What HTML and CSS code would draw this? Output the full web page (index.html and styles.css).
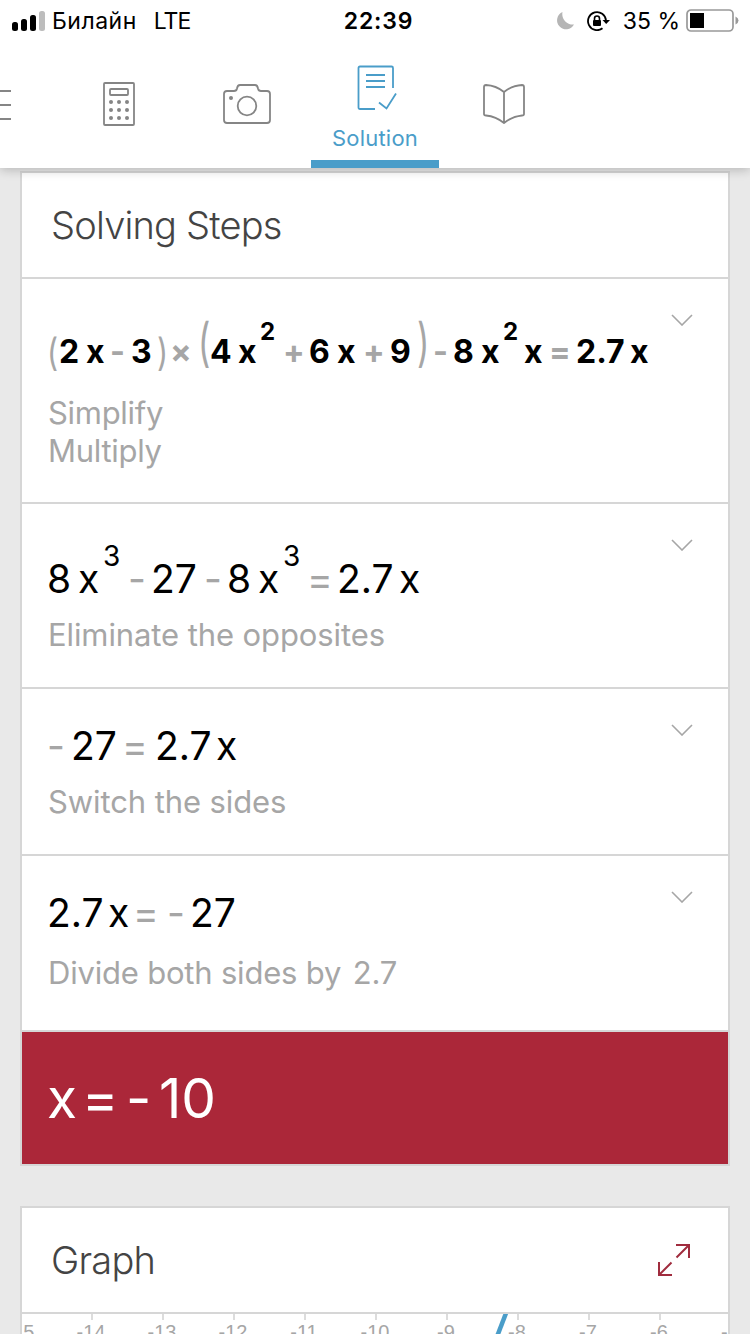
FILE: index.html
```html
<!DOCTYPE html>
<html lang="en">
<head>
  <meta charset="UTF-8" />
  <meta name="viewport" content="width=device-width, initial-scale=1.0"/>
  <title>Solution</title>
  <link rel="stylesheet" href="styles.css">
</head>
<body>

  <header class="top">
    <div class="status">
      <div class="status-left">
        <svg class="signal" viewBox="0 0 34 20">
          <rect x="0" y="11" width="6" height="9" rx="2.5"/>
          <rect x="9" y="8" width="6" height="12" rx="2.5"/>
          <rect x="18" y="4" width="6" height="16" rx="2.5"/>
          <rect x="27" y="0" width="6" height="20" rx="2.5" fill="#bdbdbd"/>
        </svg>
        <span class="carrier">Билайн</span>
        <span class="network">LTE</span>
      </div>
      <div class="clock">22:39</div>
      <div class="status-right">
        <svg class="moon" viewBox="0 0 18 18"><path d="M6.500 0A9 9 0 1 0 18 12.500A10.500 10.500 0 0 1 6.500 0z" fill="#b5b5b5"/></svg>
        <svg class="lock" viewBox="0 0 23 20">
          <path d="M15.500 17.300A9 9 0 1 1 19 9.500" fill="none" stroke="#000" stroke-width="1.800"/>
          <path d="M15.500 9H23L19.200 13z"/>
          <rect x="6" y="9" width="8" height="6" rx="1"/>
          <path d="M7.500 9.500V7.500a2.500 2.500 0 0 1 5 0V9.500" fill="none" stroke="#000" stroke-width="1.600"/>
        </svg>
        <span class="percent">35 %</span>
        <svg class="battery" viewBox="0 0 53 23">
          <rect x="1" y="1" width="46" height="21" rx="4" fill="none" stroke="#999" stroke-width="1.700"/>
          <rect x="4" y="4" width="14" height="15"/>
          <path d="M49.500 7.500q3 1.500 3 4t-3 4z" fill="#999"/>
        </svg>
      </div>
    </div>

    <nav class="tabs">
      <div class="tab tab-menu">
        <svg viewBox="0 0 12 32"><path d="M0 2H11M0 16H11M0 30H11"/></svg>
      </div>
      <div class="tab">
        <svg class="icon-calc" viewBox="0 0 32 44">
          <rect x="1" y="1" width="30" height="42" rx="1"/>
          <rect x="7" y="7" width="18" height="6" rx="1"/>
          <g class="dots">
            <circle cx="8" cy="20" r="2"/><circle cx="16" cy="20" r="2"/><circle cx="24" cy="20" r="2"/>
            <circle cx="8" cy="28" r="2"/><circle cx="16" cy="28" r="2"/><circle cx="24" cy="28" r="2"/>
            <circle cx="8" cy="36" r="2"/><circle cx="16" cy="36" r="2"/><circle cx="24" cy="36" r="2"/>
          </g>
        </svg>
      </div>
      <div class="tab">
        <svg class="icon-camera" viewBox="0 0 48 40">
          <path d="M4 7H11Q13.500 7 14 4.500Q14.500 1 17 1H32Q34.500 1 35 4.500Q35.500 7 38 7H44Q47 7 47 10V36Q47 39 44 39H4Q1 39 1 36V10Q1 7 4 7z"/>
          <circle cx="24" cy="22" r="9.300"/>
          <g class="dots"><circle cx="8" cy="14" r="2"/></g>
        </svg>
      </div>
      <div class="tab tab-active">
        <svg class="icon-solution" viewBox="0 0 40 46">
          <path d="M18 44H3Q1.500 44 1.500 42.500V3Q1.500 1.500 3 1.500H34.500Q36 1.500 36 3V23M9 10H28M9 16H28M9 22H28M22 37.500L29.500 43.500L39 28.500"/>
        </svg>
        <span>Solution</span>
      </div>
      <div class="tab">
        <svg class="icon-book" viewBox="0 0 42 40">
          <path d="M21 8Q13 1.500 3 1Q1 1 1 3V30Q1 31.500 3 31.500Q13 32.500 21 39Q29 32.500 39 31.500Q41 31.500 41 30V3Q41 1 39 1Q29 1.500 21 8zM21 8V39"/>
        </svg>
      </div>
    </nav>
  </header>

  <main>
    <section class="card">
      <h2>Solving Steps</h2>

      <div class="step step-1">
        <div class="eq eq-1">
          <i class="paren">(</i><b>2</b><b>x</b><i>-</i><b>3</b><i class="paren">)</i><i>×</i><i class="paren big">(</i><b>4</b><b>x</b><sup>2</sup><i>+</i><b>6</b><b>x</b><i>+</i><b>9</b><i class="paren big">)</i><i>-</i><b>8</b><b>x</b><sup>2</sup><b>x</b><i>=</i><b>2.7</b><b>x</b>
        </div>
        <p>Simplify<br>Multiply</p>
        <svg class="chevron" viewBox="0 0 22 12"><path d="M1 1L11 11L21 1"/></svg>
      </div>

      <div class="step step-2">
        <div class="eq eq-2">
          <b>8</b><b>x</b><sup>3</sup><i>-</i><b>27</b><i>-</i><b>8</b><b>x</b><sup>3</sup><i>=</i><b>2.7</b><b>x</b>
        </div>
        <p>Eliminate the opposites</p>
        <svg class="chevron" viewBox="0 0 22 12"><path d="M1 1L11 11L21 1"/></svg>
      </div>

      <div class="step step-3">
        <div class="eq eq-3">
          <i>-</i><b>27</b><i>=</i><b>2.7</b><b>x</b>
        </div>
        <p>Switch the sides</p>
        <svg class="chevron" viewBox="0 0 22 12"><path d="M1 1L11 11L21 1"/></svg>
      </div>

      <div class="step step-4">
        <div class="eq eq-4">
          <b>2.7</b><b>x</b><i>=</i><i>-</i><b>27</b>
        </div>
        <p>Divide both sides by <span class="value">2.7</span></p>
        <svg class="chevron" viewBox="0 0 22 12"><path d="M1 1L11 11L21 1"/></svg>
      </div>

      <div class="result">
        <div class="eq eq-result"><b>x</b><b>=</b><b>-</b><b>10</b></div>
      </div>
    </section>

    <section class="card graph">
      <div class="graph-head">
        <h2>Graph</h2>
        <svg class="expand" viewBox="0 0 34 34"><path d="M19 2H32V15M32 2L19.500 14.500M2 19V32H15M2 32L14.500 19.500"/></svg>
      </div>
      <svg class="plot" viewBox="0 0 706 40">
        <path class="ticks" d="M70 0V6M141 0V6M212 0V6M283 0V6M354 0V6M425 0V6M496 0V6M567 0V6M638 0V6"/>
        <g class="labels">
          <text x="-2" y="25">-15</text>
          <text x="69" y="25">-14</text>
          <text x="140" y="25">-13</text>
          <text x="211" y="25">-12</text>
          <text x="282" y="25">-11</text>
          <text x="353" y="25">-10</text>
          <text x="424" y="25">-9</text>
          <text x="495" y="25">-8</text>
          <text x="566" y="25">-7</text>
          <text x="637" y="25">-6</text>
          <text x="708" y="25">-5</text>
        </g>
        <path class="curve" d="M486 -6L466 46"/>
      </svg>
    </section>
  </main>

</body>
</html>
```
FILE: styles.css
```css
body {
  margin: 0;
  width: 750px;
  height: 1334px;
  overflow: hidden;
  background: #e9e9e9;
  font-family: Inter, "Liberation Sans", sans-serif;
  color: #000;
}

svg {
  display: block;
}

.top {
  position: relative;
  z-index: 1;
  height: 168px;
  background: #fff;
  box-shadow: 0 2px 10px rgba(0,0,0,0.22);
}

/* status bar */
.status {
  display: grid;
  grid-template-columns: 1fr auto 1fr;
  align-items: center;
  height: 41px;
  padding: 0 11px 0 12px;
  font-size: 23px;
}

.status-left,
.status-right {
  display: flex;
  align-items: center;
}

.status-right {
  justify-content: flex-end;
}

.signal {
  width: 34px;
  height: 20px;
  margin-right: 6px;
}

.carrier {
  margin-right: 17px;
  letter-spacing: 0.5px;
}

.network {
  letter-spacing: -1px;
}

.clock {
  margin-left: 6px;
  font-size: 23px;
  font-weight: 600;
  letter-spacing: 0.8px;
}

.moon {
  width: 18px;
  height: 18px;
  margin-right: 13px;
}

.lock {
  width: 23px;
  height: 20px;
  margin-right: 13px;
}

.percent {
  margin-right: 6px;
}

.battery {
  width: 53px;
  height: 23px;
}

/* tabs */
.tabs {
  display: grid;
  grid-template-columns: 55px 128px 128px 128px 130px;
  height: 127px;
}

.tab {
  display: flex;
  flex-direction: column;
  align-items: center;
}

.tab svg {
  fill: none;
  stroke: #858585;
  stroke-width: 1.8;
}

.tab .dots {
  fill: #858585;
  stroke: none;
}

.tab-menu {
  align-items: flex-start;
}

.tab-menu svg {
  width: 12px;
  height: 32px;
  margin-top: 48px;
}

.icon-calc {
  width: 32px;
  height: 44px;
  margin-top: 41px;
}

.icon-camera {
  width: 48px;
  height: 40px;
  margin-top: 43px;
}

.icon-book {
  width: 42px;
  height: 40px;
  margin-top: 43px;
}

.tab-active {
  box-sizing: border-box;
  border-bottom: 8px solid #4a9dc9;
  color: #4a9dc9;
  font-size: 22px;
  letter-spacing: 0.2px;
}

.tab-active svg {
  width: 40px;
  height: 46px;
  margin-top: 24px;
  margin-left: 3px;
  stroke: #4a9dc9;
}

.tab-active span {
  margin-top: 14px;
}

/* cards */
main {
  padding: 3px 20px 0;
}

.card {
  border: 2px solid #d6d6d6;
  background: #fff;
  margin-bottom: 40px;
}

h2 {
  margin: 0;
  padding-left: 29px;
  font-size: 38px;
  font-weight: 300;
  line-height: 104px;
  letter-spacing: -0.8px;
  color: #444;
}

.card > h2,
.graph-head {
  border-bottom: 2px solid #d6d6d6;
}

.step {
  position: relative;
  box-sizing: border-box;
  padding-left: 25px;
  border-bottom: 2px solid #d6d6d6;
}

.step-1 { height: 225px; padding-top: 49px; }
.step-2 { height: 185px; padding-top: 51px; }
.step-3 { height: 167px; padding-top: 33px; }
.step-4 { height: 176px; padding-top: 33px; }

.step p {
  margin: 13px 0 0 1px;
  font-size: 31px;
  line-height: 38px;
  letter-spacing: -0.1px;
  color: #a6a6a6;
}

.step-1 p {
  margin-top: 18px;
  letter-spacing: -0.3px;
}

.step-4 p {
  margin-top: 17px;
  letter-spacing: -0.2px;
}

.value {
  margin-left: 3px;
}

.chevron {
  position: absolute;
  top: 35px;
  right: 35px;
  width: 22px;
  height: 12px;
  fill: none;
  stroke: #a6a6a6;
  stroke-width: 1.6;
}

/* equations: one column per token */
.eq {
  display: grid;
  height: 48px;
  line-height: 48px;
  font-size: 39px;
  white-space: nowrap;
}

.eq b,
.eq i,
.eq sup {
  font-style: normal;
  font-weight: 400;
}

.eq i {
  color: #a6a6a6;
}

.eq sup {
  font-size: 28px;
  line-height: 48px;
  transform: translateY(-23px);
}

.eq-1 {
  grid-template-columns: 12px 27px 24px 21px 26px 13px 28px 12px 28px 22px 23px 26px 28px 26px 27px 27px 16px 20px 28px 22px 21px 25px 27px 54px 18px;
  font-size: 32px;
}

.eq-1 b,
.eq-1 i,
.eq-1 sup {
  font-weight: 650;
}

.eq-1 sup {
  font-size: 24px;
  transform: translateY(-20px);
}

.eq-1 .paren {
  font-size: 38px;
  font-weight: 400;
  transform: scaleX(0.8);
  transform-origin: left;
}

.eq-1 .big {
  font-size: 52px;
  transform: translateY(-9px) scaleX(0.65);
}

.eq-2 {
  grid-template-columns: 31px 25px 25px 23px 53px 23px 31px 25px 24px 30px 62px 18px;
}

.eq-3 {
  grid-template-columns: 24px 51px 33px 61px 18px;
}

.eq-4 {
  grid-template-columns: 61px 25px 34px 23px 44px;
}

.result {
  height: 132px;
  padding-left: 25px;
  background: #ab2739;
  color: #fff;
}

.eq-result {
  grid-template-columns: 35px 44px 33px 60px;
  font-size: 55px;
  line-height: 132px;
}

/* graph */
.graph-head {
  display: flex;
  align-items: center;
  justify-content: space-between;
}

.expand {
  width: 34px;
  height: 34px;
  margin-right: 37px;
  fill: none;
  stroke: #a02c3e;
  stroke-width: 2;
}

.plot {
  width: 706px;
  height: 40px;
}

.ticks {
  stroke: #dcdcdc;
  stroke-width: 2;
}

.labels {
  fill: #a6a6a6;
  font-family: "Liberation Sans", sans-serif;
  font-size: 20px;
  text-anchor: middle;
}

.curve {
  fill: none;
  stroke: #4a9dc9;
  stroke-width: 4.500;
}
```
